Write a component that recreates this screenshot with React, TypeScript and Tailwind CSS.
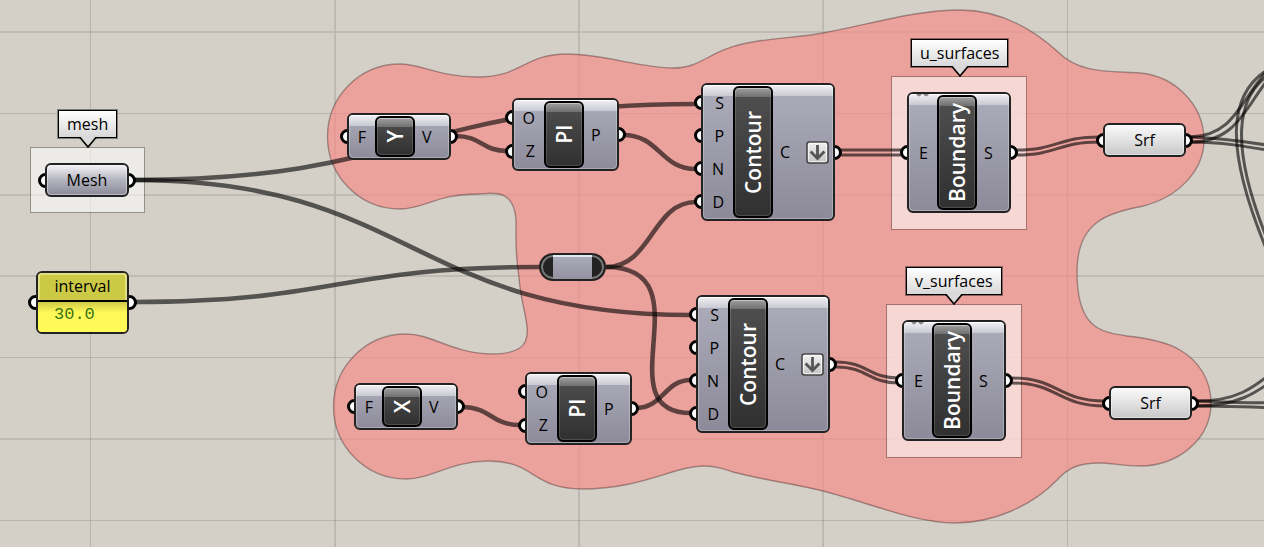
import type { ReactNode } from "react";
import clsx from "clsx";

const REGION =
  "M400 64 C421 64 440 77 478 77 C522 77 524 54 567 54 C602 54 642 68 673 68 C704 68 708 49 753 42 C775 38 803 37 823 33 C872 24 915 10 960 10 C1002 10 1036 32 1058 52 C1080 74 1110 71 1140 73 C1175 76 1204 105 1204 140 C1204 170 1179 197 1143 206 C1112 213 1077 218 1077 272 C1077 328 1100 332 1127 336 C1146 338 1165 341 1180 350 C1199 361 1211 380 1211 403 C1211 440 1177 466 1140 466 C1125 466 1111 463 1100 463 C1078 463 1068 468 1057 480 C1032 506 993 523 955 523 C915 523 870 503 823 491 C790 483 763 480 733 472 C724 469 718 466 704 466 C674 466 642 489 582 489 C532 489 535 461 489 461 C450 461 432 479 406 479 A72.5 72.5 0 0 1 406 334 C433 334 450 353 492 354 C548 354 521 319 519 277 C515 252 516 242 516 220 C514 186 489 194 478 194 C436 194 425 209 400 209 A72.5 72.5 0 0 1 400 64 Z";

const WIRES = [
  "M134 180 C414 180 414 104 696 104",
  "M134 180 C412 180 412 315 691 315",
  "M134 302 C337 302 337 267 540 267",
  "M455 136 C482 136 482 151 507 151",
  "M623 135 C660 135 660 169 696 169",
  "M606 267 C652 267 652 202 696 202",
  "M606 267 C709 267 602 413 691 413",
  "M462 407 C491 407 491 425 520 425",
  "M635 408 C664 408 664 380 691 380",
];

const DOUBLE_WIRES = [
  "M840 150 H904 M840 155 H904",
  "M1016 150 C1058 150 1058 137 1099 137 M1016 155 C1058 155 1058 142 1099 142",
  "M836 362 C868 362 868 378 899 378 M836 367 C868 367 868 383 899 383",
  "M1012 378 C1058 378 1058 401 1105 401 M1012 383 C1058 383 1058 406 1105 406",
];

const OUTGOING = [
  "M1191 137 C1239 135 1240 94 1280 57",
  "M1191 142 C1245 142 1248 92 1282 66",
  "M1191 137 C1220 138 1245 141 1284 148",
  "M1191 142 C1220 142 1245 146 1284 153",
  "M1284 62 C1222 84 1224 150 1270 258",
  "M1284 67 C1230 88 1228 150 1275 258",
  "M1197 401 C1235 401 1252 390 1280 366",
  "M1197 406 C1235 406 1256 395 1284 371",
  "M1197 401 C1225 402 1245 403 1284 403",
  "M1197 406 C1225 406 1245 407 1284 408",
];

function Backdrop() {
  return (
    <svg className="absolute inset-0 h-full w-full" aria-hidden="true">
      <g stroke="#000" strokeOpacity="0.13">
        <path strokeWidth="1" d="M90.5 0V2000M1067.5 0V2000M0 113.5H4000M0 357.5H4000M0 520.5H4000" />
        <path strokeWidth="1.6" d="M335 0V2000M579 0V2000M823 0V2000M0 32H4000M0 195H4000M0 276H4000M0 439H4000" />
      </g>
      <path d={REGION} fill="#f88a86" fillOpacity="0.67" stroke="#402020" strokeOpacity="0.4" strokeWidth="1.4" />
    </svg>
  );
}

function Wires() {
  return (
    <svg className="absolute inset-0 h-full w-full" fill="none" stroke="#000" strokeOpacity="0.6" aria-hidden="true">
      {WIRES.map((d) => (
        <path key={d} d={d} strokeWidth="4.6" />
      ))}
      {[...DOUBLE_WIRES, ...OUTGOING].map((d) => (
        <path key={d} d={d} strokeWidth="3" />
      ))}
    </svg>
  );
}

function Port({ side }: { side: "left" | "right" }) {
  return (
    <span
      className={clsx(
        "absolute inset-y-0 -z-10 my-auto size-[15px] rounded-full border-3 border-black bg-white",
        side === "left" ? "-left-[10px]" : "-right-[10px]",
      )}
    />
  );
}

function ExpandIcon() {
  return (
    <svg className="size-[23px]" viewBox="0 0 23 23" aria-hidden="true">
      <defs>
        <linearGradient id="expand-face" x1="0" y1="0" x2="0" y2="1">
          <stop offset="0" stopColor="#f2f2f2" />
          <stop offset="1" stopColor="#c4c4c4" />
        </linearGradient>
      </defs>
      <rect x="1" y="1" width="21" height="21" rx="2.5" fill="url(#expand-face)" stroke="#444" strokeWidth="1.6" />
      <rect x="2.4" y="2.4" width="18.2" height="18.2" rx="1" fill="none" stroke="#fff" strokeOpacity="0.7" />
      <path d="M11.5 4V18M4.6 10.6L11.5 17.6L18.4 10.6" fill="none" stroke="#555" strokeWidth="2.8" />
    </svg>
  );
}

type ComponentProps = {
  title: string;
  inputs: string[];
  output: string;
  place: string;
  inputWidth: string;
  expand?: boolean;
  marked?: boolean;
};

function Component({ title, inputs, output, place, inputWidth, expand, marked }: ComponentProps) {
  return (
    <section aria-label={title} className={clsx("absolute isolate", place)}>
      <div className="flex h-full rounded-md border-2 border-[#222] bg-linear-to-b from-[#adadbb] to-[#8c8a98] bg-origin-border p-px">
        <span className="absolute inset-x-[2px] top-[2px] h-[11px] rounded-t-sm border-t border-white bg-linear-to-b from-[#ededf1] to-[#c9c9d3]" />
        <span className="absolute inset-[2px] rounded-sm border border-white/25" />
        {marked && (
          <svg className="absolute left-[9px] top-[1px] h-[4px] w-[14px]" viewBox="0 0 14 4" aria-hidden="true">
            <path d="M0 1H6Q5 3 3 3.4Q1 3 0 1ZM7 1H13Q12 3 10 3.4Q8 3 7 1Z" fill="#888" />
          </svg>
        )}
        <div className={clsx("flex flex-col", inputWidth)}>
          {inputs.map((name) => (
            <div key={name} className="relative flex flex-1 items-center justify-end pr-[9px]">
              <Port side="left" />
              <span className="relative">{name}</span>
            </div>
          ))}
        </div>
        <div className="relative flex w-10 items-center justify-center overflow-hidden rounded-md border-2 border-black bg-linear-to-b from-[#505050] to-[#303030]">
          <span className="absolute inset-x-0 top-0 h-[9px] border-t border-[#b8b8b8] bg-linear-to-b from-[#9a9a9a] to-[#707070]" />
          <span className="absolute inset-0 rounded-sm border border-white/15" />
          <h2 className="relative rotate-180 text-[21px] font-semibold leading-7 text-white [writing-mode:vertical-rl]">
            {title}
          </h2>
        </div>
        <div className="relative flex flex-1 items-center justify-between pl-[7px] pr-[3px]">
          <Port side="right" />
          <span className="relative">{output}</span>
          {expand && <ExpandIcon />}
        </div>
      </div>
    </section>
  );
}

function Parameter({ label, place, face }: { label: string; place: string; face: string }) {
  return (
    <section aria-label={label} className={clsx("absolute isolate", place)}>
      <div className={clsx("flex h-full items-center justify-center rounded-md border-2 border-[#222] p-px", face)}>
        <span className="absolute inset-[2px] rounded-sm border border-white/40" />
        <div className="relative flex h-full w-full items-center justify-center">
          <Port side="left" />
          <Port side="right" />
          <span>{label}</span>
        </div>
      </div>
    </section>
  );
}

function Group({ place, name, pin, children }: { place: string; name: string; pin: string; children?: ReactNode }) {
  return (
    <div className={clsx("absolute border border-black/30 bg-white/57 bg-clip-padding", place)}>
      <div className={clsx("absolute border border-black bg-linear-to-b from-white to-[#d8d8d8] outline outline-black/40", pin)}>
        <p className="px-2 leading-[26px]">{name}</p>
        <svg className="absolute left-1/2 top-full h-[12px] w-[20px] -translate-x-1/2" viewBox="0 0 20 12" aria-hidden="true">
          <path d="M2 -1H18V0L10 9L2 0Z" fill="#dadada" />
          <path d="M1 0.5H2L10 10L18 0.5H19" fill="none" stroke="#000" strokeWidth="1.6" />
        </svg>
      </div>
      {children}
    </div>
  );
}

function IntervalPanel() {
  return (
    <section aria-label="interval" className="absolute left-[36px] top-[271px] isolate w-[93px]">
      <div className="relative rounded-md border-2 border-[#222] bg-[#fffa58]">
        <Port side="left" />
        <Port side="right" />
        <h2 className="rounded-t-sm border-2 border-b-0 border-[#e2df83] bg-[#ccc946] pb-0.5 text-center leading-[23px]">interval</h2>
        <p className="relative h-[32px] rounded-b-sm border-t-2 border-black bg-linear-to-b from-[#cfcb48] to-[#fffa58] to-35% pl-4 font-['Liberation_Mono',monospace] text-[17px] leading-[26px] text-[#3c7414]">
          30.0
        </p>
      </div>
    </section>
  );
}

function Relay() {
  return (
    <div className="absolute left-[539px] top-[253px] flex h-7 w-[67px] overflow-hidden rounded-full border-2 border-[#222] bg-[#222]">
      <span className="absolute inset-0 rounded-full border-2 border-[#777]" />
      <span className="relative mx-auto w-[39px] border-t-2 border-[#e6e6ee] bg-linear-to-b from-[#aaaab8] to-[#9391a0]" />
    </div>
  );
}

export default function App() {
  return (
    <main className="relative min-h-screen w-full overflow-hidden bg-[#d4d0c8] font-['Open_Sans','Noto_Sans',sans-serif] text-base leading-6 text-black">
      <Backdrop />
      <Group name="mesh" place="left-[30px] top-[147px] h-[66px] w-[115px]" pin="left-[27px] -top-[38px]" />
      <Group name="u_surfaces" place="left-[891px] top-[76px] h-[154px] w-[136px]" pin="left-[19px] -top-[38px]" />
      <Group name="v_surfaces" place="left-[886px] top-[304px] h-[154px] w-[136px]" pin="left-[19px] -top-[38px]" />
      <Wires />

      <Parameter
        label="Mesh"
        place="left-[45px] top-[163px] h-[34px] w-[84px]"
        face="bg-linear-to-b from-[#ededf1] from-5% via-[#b4b4c0] via-50% to-[#8c8a98]"
      />
      <IntervalPanel />
      <Component title="Y" inputs={["F"]} output="V" inputWidth="w-[25px]" place="left-[347px] top-[113px] h-[47px] w-[104px]" />
      <Component title="X" inputs={["F"]} output="V" inputWidth="w-[25px]" place="left-[354px] top-[383px] h-[47px] w-[104px]" />
      <Component title="Pl" inputs={["O", "Z"]} output="P" inputWidth="w-[29px]" place="left-[512px] top-[98px] h-[73px] w-[107px]" />
      <Component title="Pl" inputs={["O", "Z"]} output="P" inputWidth="w-[29px]" place="left-[525px] top-[372px] h-[73px] w-[107px]" />
      <Relay />
      <Component title="Contour" inputs={["S", "P", "N", "D"]} output="C" expand inputWidth="w-[29px]" place="left-[701px] top-[83px] h-[138px] w-[134px]" />
      <Component title="Contour" inputs={["S", "P", "N", "D"]} output="C" expand inputWidth="w-[29px]" place="left-[696px] top-[295px] h-[138px] w-[134px]" />
      <Component title="Boundary" inputs={["E"]} output="S" marked inputWidth="w-[27px]" place="left-[907px] top-[92px] h-[121px] w-[104px]" />
      <Component title="Boundary" inputs={["E"]} output="S" marked inputWidth="w-[27px]" place="left-[902px] top-[320px] h-[121px] w-[104px]" />
      <Parameter
        label="Srf"
        place="left-[1103px] top-[123px] h-[34px] w-[83px]"
        face="bg-linear-to-b from-[#fafafa] via-[#e2e2e2] to-[#c8c8c8]"
      />
      <Parameter
        label="Srf"
        place="left-[1109px] top-[386px] h-[34px] w-[83px]"
        face="bg-linear-to-b from-[#fafafa] via-[#e2e2e2] to-[#c8c8c8]"
      />
    </main>
  );
}
